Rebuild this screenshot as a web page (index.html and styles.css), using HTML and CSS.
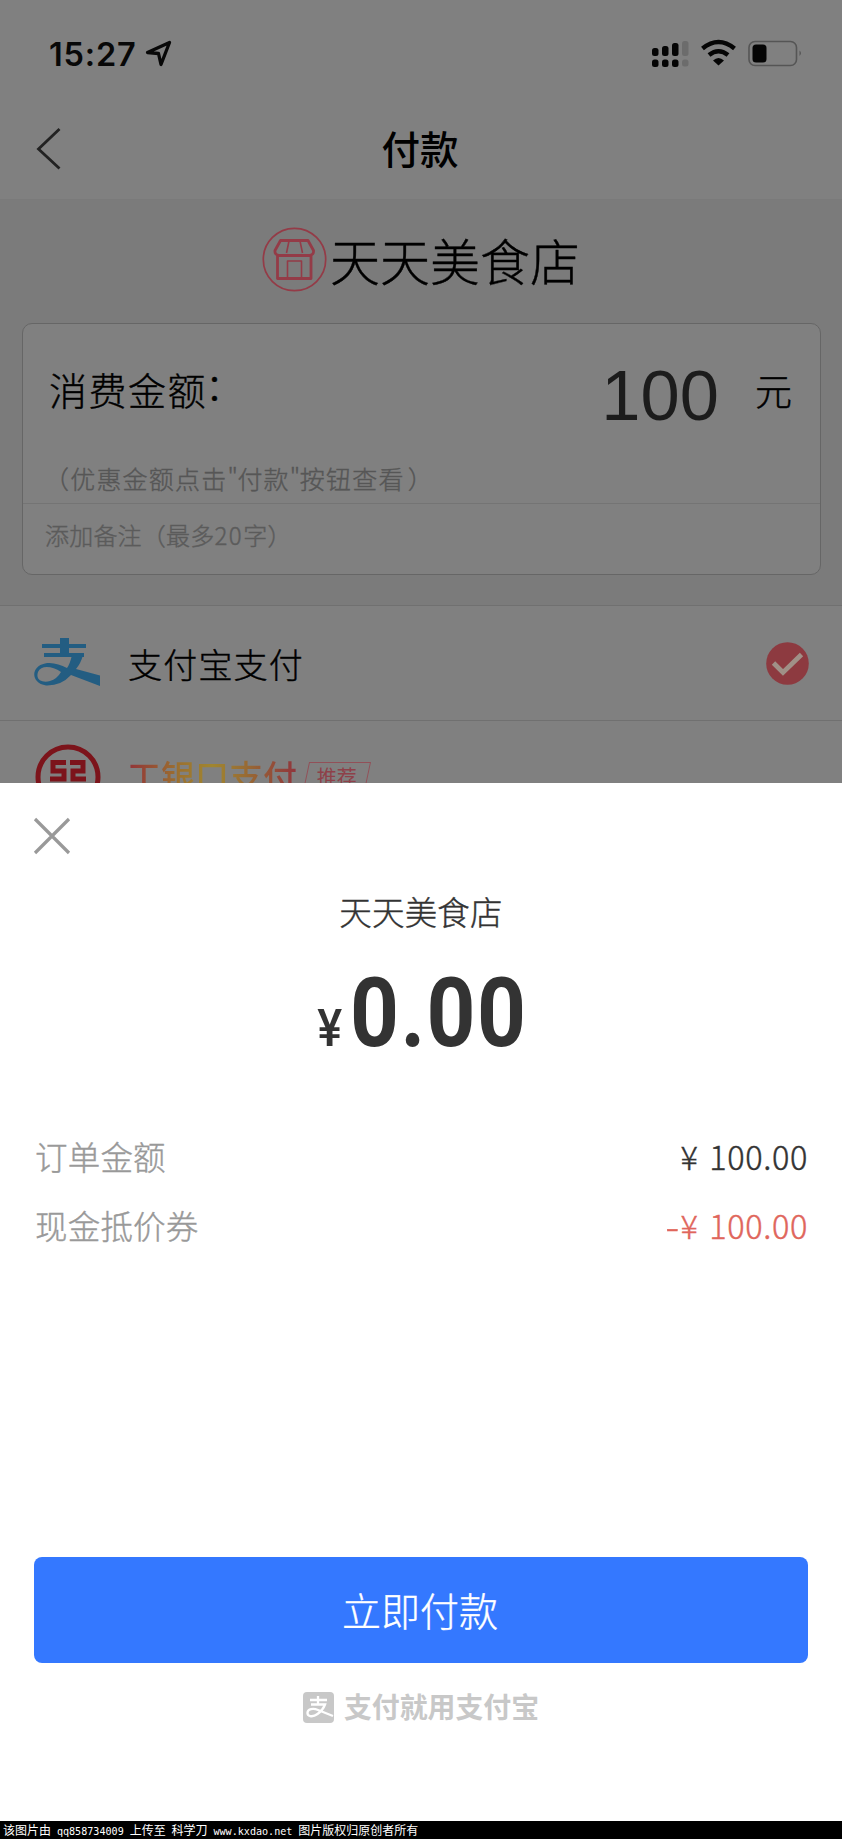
FILE: index.html
```html
<!DOCTYPE html>
<html lang="zh-CN">
<head>
<meta charset="utf-8">
<title>付款</title>
<link rel="stylesheet" href="styles.css">
</head>
<body>
<div class="page">
  <main class="backdrop">
    <div class="status">
      <span class="time">15:27</span>
      <svg class="locate" width="28" height="28" viewBox="0 0 28 28"><path d="M2.500 13.500 24.500 3.500 16 25.500 13.500 14.500Z" fill="none" stroke="#080808" stroke-width="3.300" stroke-linejoin="round"/></svg>
      <svg class="indicators" width="154" height="30" viewBox="0 0 154 30">
        <g fill="#050505"><rect x="0" y="9" width="6.500" height="8" rx="2.500"/><rect x="10" y="7" width="6.500" height="10" rx="2.500"/><rect x="20" y="4" width="6.500" height="13" rx="2.500"/><rect x="0" y="20.500" width="6.500" height="7.500" rx="2.500"/><rect x="10" y="20.500" width="6.500" height="7.500" rx="2.500"/><rect x="20" y="20.500" width="6.500" height="7.500" rx="2.500"/></g>
        <g fill="#6c6c6c"><rect x="30" y="2" width="6.500" height="15" rx="2.500"/><rect x="30" y="20.500" width="6.500" height="7" rx="2.500"/></g>
        <g fill="none" stroke="#050505" stroke-width="4.500"><path d="M50.500 9.500Q66.500-3.500 82.500 9.500"/><path d="M57 16Q66.500 8.500 76 16"/></g>
        <path d="M61 21.500Q66.500 16.500 72 21.500L66.500 26.500Z" fill="#050505"/>
        <rect x="97" y="2.500" width="47.500" height="24" rx="6" fill="none" stroke="#555" stroke-width="1.600"/>
        <rect x="100.500" y="5.500" width="14" height="18" rx="3.500" fill="#050505"/>
        <path d="M147.500 11.500Q150.500 14 147.500 17Z" fill="#555"/>
      </svg>
    </div>
    <div class="nav">
      <svg class="back" width="28" height="44" viewBox="0 0 28 44"><path d="M24.500 2 3.500 22 24.500 41.500" fill="none" stroke="#222" stroke-width="2.800"/></svg>
      <h1 class="nav-title">付款</h1>
    </div>
    <section class="store">
      <div class="store-head">
        <svg width="65" height="65" viewBox="0 0 65 65" fill="none" stroke="#943b47" stroke-linejoin="round">
          <circle cx="32.500" cy="32.500" r="31.200" stroke-width="1.700"/>
          <g stroke-width="2.800"><path d="M18.500 13.500H46L51.500 23.500Q52 28 47.500 28.500H17Q12.500 28 13 23.500Z"/><path d="M15.500 28.500V51.500H49V28.500"/></g>
          <g stroke-width="1.600"><path d="M27 14 24.500 26M38 14 40.500 26M25.500 51V34H39.500V51"/></g>
        </svg>
        <span class="store-name">天天美食店</span>
      </div>
      <div class="card">
        <div class="amount-row"><span class="amount-label">消费金额<span class="colon">：</span></span><span class="amount-value">100</span><span class="amount-unit">元</span></div>
        <div class="hint">（优惠金额点击<span class="quote">"</span>付款<span class="quote">"</span>按钮查看<span class="close-paren">）</span></div>
        <div class="note">添加备注（最多<span class="digits">20</span>字）</div>
      </div>
    </section>
    <div class="method">
      <svg class="method-icon" width="68" height="50" viewBox="0 0 68 50">
        <g fill="#235d82"><path d="M27 1H36V18H27Z"/><path d="M9 7H53V11H9Z"/><path d="M11 16H51V20H11Z"/></g>
        <path d="M39 18H50Q48 26 43 32L67 38.500V49L38 38Q28 49 13 48.500C-3 46 -2 29 12 26.500C20 25 27 28 34 31Q37 27 39 18ZM28 35C19 29 8 28 5 35C2 44 11 46 17 44Q24 42 28 35Z" fill="#235d82" fill-rule="evenodd"/>
      </svg>
      <span class="method-name">支付宝支付</span>
      <svg class="check" width="43" height="43" viewBox="0 0 43 43"><circle cx="21.500" cy="21.500" r="21.300" fill="#8d3a40"/><path d="M7.500 21 17 30.500 35.500 12.500" fill="none" stroke="#a09087" stroke-width="4.800"/></svg>
    </div>
    <div class="method bank">
      <svg class="bank-logo" width="66" height="66" viewBox="0 0 66 66" fill="none" stroke="#7c141b"><circle cx="33" cy="33" r="30" stroke-width="5"/><path d="M31 18.500H18V27H29V35H15M35 18.500H48V27H38V35H51" stroke-width="5"/></svg>
      <span class="bank-name">工银口支付</span>
      <span class="tag"><span class="tag-text">推荐</span></span>
    </div>
  </main>
  <section class="sheet">
    <svg class="close" width="38" height="38" viewBox="0 0 38 38"><path d="M2 2 36 36M36 2 2 36" stroke="#999" stroke-width="3.200"/></svg>
    <h2 class="sheet-store">天天美食店</h2>
    <div class="total"><span class="yen">¥</span><span class="sum">0.00</span></div>
    <div class="line"><span>订单金额</span><span class="value">¥ 100.00</span></div>
    <div class="line"><span>现金抵价券</span><span class="value discount"><span class="minus">-</span>¥ 100.00</span></div>
    <button class="pay">立即付款</button>
    <div class="brand">
      <svg width="31" height="31" viewBox="0 0 31 31"><rect width="31" height="31" rx="4" fill="#c8c8c8"/><path d="M15 4V12M7 8H24M8 12.500H22Q20 18 14.500 22C9 26 4 24 4.500 20.500C5 17 10 16 15 18L30 24" fill="none" stroke="#fff" stroke-width="2.300"/></svg>
      <span class="brand-text">支付就用支付宝</span>
    </div>
  </section>
  <footer class="credit">该图片由 <span class="latin">qq858734009</span> 上传至 科学刀 <span class="latin">www.kxdao.net</span> 图片版权归原创者所有</footer>
</div>
</body>
</html>
```
FILE: styles.css
```css
* { box-sizing: border-box; }
body { margin: 0; font-family: "Noto Sans CJK SC", sans-serif; font-weight: 300; color: #000; }
.page { width: 842px; height: 1839px; overflow: hidden; background: #fff; }
.backdrop { height: 783px; overflow: hidden; background: #808080; }

/* Slightly fattened light weight for the body copy */
.store-name, .amount-label, .amount-unit, .method-name, .hint, .note, .sheet-store, .line, .pay { -webkit-text-stroke: .4px currentColor; }

.status { height: 106px; display: flex; align-items: flex-start; padding: 36px 36px 0 49px; }
.time { font: 600 32.500px/37px Inter, sans-serif; letter-spacing: .8px; width: 96px; color: #080808; white-space: nowrap; }
.locate { margin-top: 3px; }
.indicators { margin: 3px 0 0 auto; }

.nav { height: 94px; display: grid; grid-template-columns: 99px 1fr 101px; border-bottom: 1px solid #7a7a7a; }
.back { margin: 21px 0 0 35px; }
.nav-title { margin: 0; font-size: 38.500px; font-weight: 500; line-height: 82px; text-align: center; }

.store { height: 405px; padding: 27px 22px 0; background: #7b7b7b; }
.store-head { height: 96px; display: flex; justify-content: center; gap: 3px; }
.store-name { font-size: 50px; line-height: 65px; }
.card { height: 252px; border: 1px solid #666; border-radius: 10px; background: #808080; margin-right: -1px; }
.amount-row { height: 138px; display: flex; padding: 0 28px 0 26px; }
.amount-label { font-size: 38px; letter-spacing: 1.500px; line-height: 129px; flex: 1; }
.colon { display: inline-block; transform: translate(-2px, -5px); }
.amount-value { font: 70.500px/143px "Liberation Sans", sans-serif; color: #1c1c1c; }
.amount-unit { font-size: 37px; line-height: 133px; margin-left: 36px; }
.hint { height: 42px; padding-left: 21px; font-size: 25px; letter-spacing: 1.200px; line-height: 32px; color: #565656; border-bottom: 1px solid #747474; }
.quote { display: inline-block; width: 10px; }
.close-paren { margin-left: 3px; }
.note { padding-left: 22px; font-size: 24px; letter-spacing: .2px; line-height: 61px; color: #5b5b5b; }
.digits { letter-spacing: 1.600px; }

.method { height: 115px; border-top: 1px solid #707070; display: flex; padding: 0 33px; }
.method-icon { margin-top: 31px; }
.method-name { font-size: 34px; letter-spacing: 1.200px; line-height: 116px; margin-left: 27px; flex: 1; }
.check { margin-top: 36px; }
.bank-logo { margin: 23px 0 0 2px; }
.bank-name { margin: 30px 0 0 26px; font-size: 34px; line-height: 50px; height: 50px; font-weight: 500; color: transparent; background: linear-gradient(90deg, #923238, #9b7030 30%, #a08630 50%, #986b34 70%, #90343c); background-clip: text; -webkit-background-clip: text; }
.tag { margin: 41px 0 0 8px; width: 62px; height: 38px; border: 1px solid #925058; transform: skewX(-12deg); text-align: center; }
.tag-text { display: inline-block; transform: skewX(12deg); font-size: 20px; font-weight: 400; line-height: 28px; color: #8e4049; }

.sheet { height: 1038px; padding: 34px 34px 0 34px; display: flex; flex-direction: column; background: #fff; color: #333; }
.close { margin-left: -1px; flex: none; }
.sheet-store { margin: 34px 0 0; font-size: 32.500px; font-weight: 300; line-height: 44px; text-align: center; letter-spacing: .2px; }
.total { height: 148px; margin-top: 38px; display: flex; justify-content: center; align-items: baseline; font-family: Roboto, sans-serif; font-weight: 700; line-height: 84px; }
.yen { width: 34px; font-size: 51px; font-weight: 500; transform: scaleX(.92); }
.sum { width: 177px; font-size: 97px; letter-spacing: 1.600px; transform: scaleX(.88); transform-origin: left; }
.line { height: 69px; display: flex; justify-content: space-between; padding-left: 1px; font-size: 32.500px; letter-spacing: .2px; line-height: 73px; color: #999; }
.value { color: #333; letter-spacing: .6px; word-spacing: 3px; }
.minus { display: inline-block; margin-right: 2px; transform: scale(1.250, 1.100); }
.discount { color: #e0665c; }
.pay { height: 106px; margin: 300px 0 0; padding: 0; border: 0; border-radius: 8px; background: #3478ff; color: #fff; font-family: inherit; font-size: 39px; font-weight: 300; line-height: 98px; padding: 0 2px 3px 0; flex: none; }
.brand { margin-top: 29px; display: flex; justify-content: center; gap: 10px; }
.brand-text { font-size: 27.900px; font-weight: 700; line-height: 29px; color: #c8c8c8; }

.credit { height: 18px; padding-left: 3px; background: #000; color: #fff; font-size: 12px; font-weight: 400; line-height: 17px; white-space: pre; word-spacing: 3.200px; }
.latin { font: 10.100px/17px "DejaVu Sans Mono", monospace; }
```
